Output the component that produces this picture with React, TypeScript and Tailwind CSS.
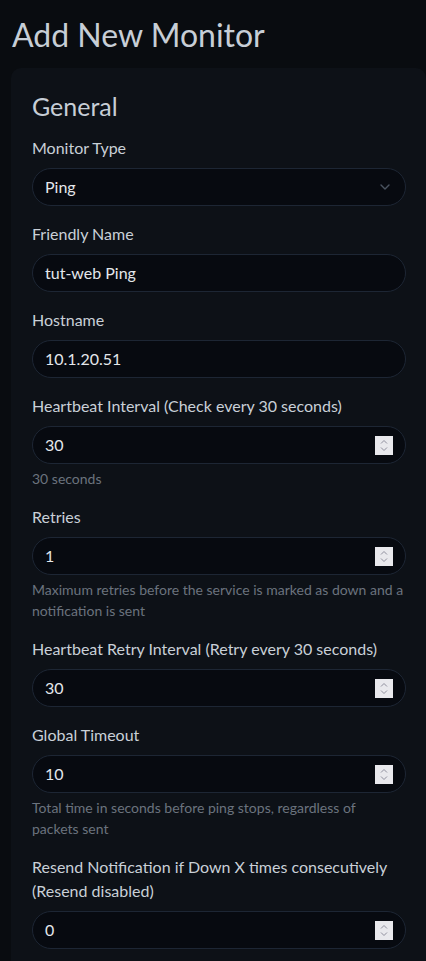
import { ReactNode } from "react";

function Chevron() {
  return (
    <svg width="10" height="6" viewBox="0 0 10 6" fill="none" className="text-[#4b5461]">
      <path d="M1 1l4 4 4-4" stroke="currentColor" strokeWidth="1.4" strokeLinecap="round" strokeLinejoin="round" />
    </svg>
  );
}

function Spinner() {
  return (
    <div className="flex h-[19px] w-[18px] flex-col items-center justify-center gap-[3px] bg-[#e9e9ed]">
      <svg width="8" height="4" viewBox="0 0 8 4" fill="none">
        <path d="M1 3.5l3-3 3 3" stroke="#8f8f9d" strokeWidth="1" />
      </svg>
      <svg width="8" height="4" viewBox="0 0 8 4" fill="none">
        <path d="M1 0.5l3 3 3-3" stroke="#8f8f9d" strokeWidth="1" />
      </svg>
    </div>
  );
}

function Field({
  label,
  value,
  help,
  kind,
}: {
  label: ReactNode;
  value: string;
  help?: ReactNode;
  kind: "select" | "text" | "number";
}) {
  return (
    <div className="mb-4">
      <div className="mb-2 text-[16px] leading-6 text-[#c9d0d7]">{label}</div>
      <div className="flex h-[38px] items-center justify-between rounded-full border border-[#1d2634] bg-[#070a10] pl-3 pr-3">
        <span className="text-[16px] leading-6 text-[#e4e7eb]">{value}</span>
        {kind === "select" && (
          <span className="mr-[3px]">
            <Chevron />
          </span>
        )}
        {kind === "number" && <Spinner />}
      </div>
      {help && <div className="mt-1 text-[14px] leading-[21px] text-[#6b737e]">{help}</div>}
    </div>
  );
}

export default function App() {
  return (
    <div className="min-h-screen overflow-hidden bg-[#090c10] font-['Lato','Liberation_Sans',sans-serif]">
      <h1 className="px-3 pt-[14px] pb-[12px] text-[32px] leading-[42px] text-[#c7ced6]">Add New Monitor</h1>
      <div className="ml-[11px] rounded-[10px] bg-[#0d1117] pt-[22px] pl-[21px] pr-5 pb-4">
        <h2 className="mb-[14px] text-[25px] leading-[32px] text-[#c7ced6]">General</h2>
        <Field label="Monitor Type" value="Ping" kind="select" />
        <Field label="Friendly Name" value="tut-web Ping" kind="text" />
        <Field label="Hostname" value="10.1.20.51" kind="text" />
        <Field
          label="Heartbeat Interval (Check every 30 seconds)"
          value="30"
          kind="number"
          help="30 seconds"
        />
        <Field
          label="Retries"
          value="1"
          kind="number"
          help="Maximum retries before the service is marked as down and a notification is sent"
        />
        <Field label="Heartbeat Retry Interval (Retry every 30 seconds)" value="30" kind="number" />
        <Field
          label="Global Timeout"
          value="10"
          kind="number"
          help={
            <>
              Total time in seconds before ping stops, regardless of
              <br />
              packets sent
            </>
          }
        />
        <Field
          label="Resend Notification if Down X times consecutively (Resend disabled)"
          value="0"
          kind="number"
        />
      </div>
    </div>
  );
}
